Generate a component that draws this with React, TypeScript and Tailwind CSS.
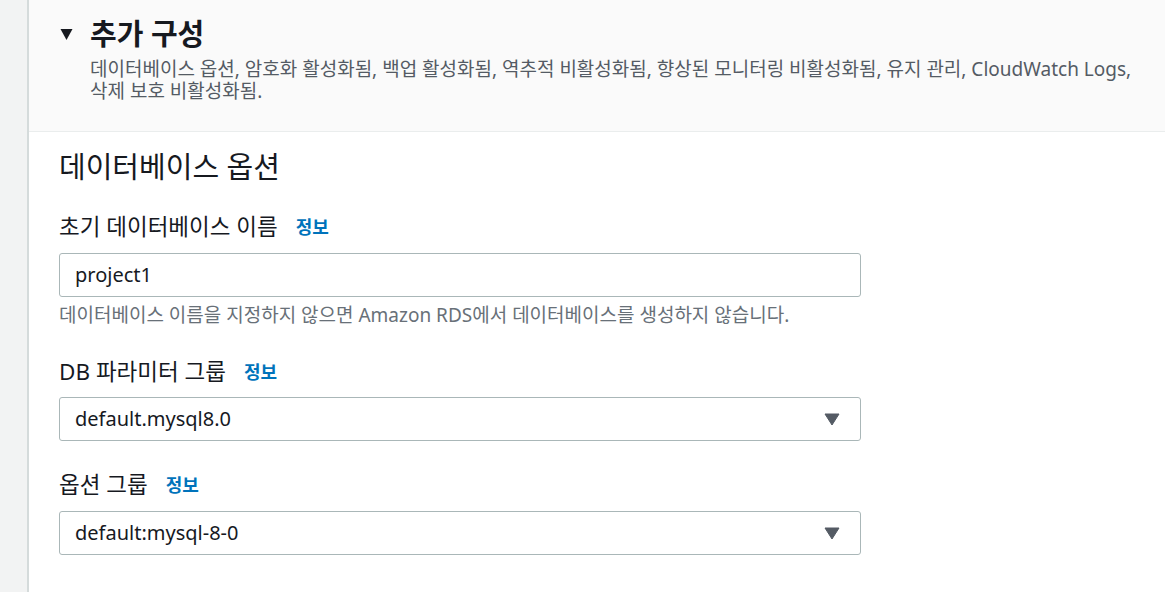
import React from "react";

const font = { fontFamily: '"Noto Sans", "Noto Sans CJK KR", sans-serif' };

function Label({ text }: { text: string }) {
  return (
    <div className="flex h-[30px] items-center gap-[18px] text-[22.5px] text-[#16191f]">
      <span>{text}</span>
      <span className="text-[18px] font-bold text-[#0073bb]">정보</span>
    </div>
  );
}

function Caret() {
  return (
    <svg width="16" height="13" viewBox="0 0 16 13" className="shrink-0">
      <path d="M1 1h14l-7 11z" fill="#545b64" stroke="#545b64" strokeWidth="1" strokeLinejoin="round" />
    </svg>
  );
}

function SelectBox({ value }: { value: string }) {
  return (
    <div className="flex h-[44px] w-[802px] items-center justify-between rounded-[3px] border border-[#aab7b8] bg-white pl-[15px] pr-[20px] text-[20px] text-[#16191f]">
      <span>{value}</span>
      <Caret />
    </div>
  );
}

export default function App() {
  return (
    <div style={font} className="flex h-[592px] w-[1165px] overflow-hidden bg-white">
      <div className="w-[29px] shrink-0 border-r-2 border-[#d5dbdb] bg-[#f2f3f3]" />
      <div className="flex-1">
        <div className="h-[132px] border-b border-[#eaeded] bg-[#fafafa] pl-[31px] pt-[15px]">
          <div className="flex h-[38px] items-center">
            <svg width="13" height="13" viewBox="0 0 13 13" className="mr-[17px]">
              <path d="M0.5 1h12l-6 11z" fill="#16191f" />
            </svg>
            <span className="text-[29px] font-bold text-[#16191f]">추가 구성</span>
          </div>
          <p className="mt-[5px] pl-[30px] text-[19px] leading-[22px] text-[#545b64]">
            데이터베이스 옵션, 암호화 활성화됨, 백업 활성화됨, 역추적 비활성화됨, 향상된 모니터링 비활성화됨, 유지 관리, CloudWatch Logs,
            <br />
            삭제 보호 비활성화됨.
          </p>
        </div>
        <div className="pl-[30px] pt-[15px]">
          <h2 className="text-[29px] leading-[40px] text-[#16191f]">데이터베이스 옵션</h2>
          <div className="mt-[25px]">
            <Label text="초기 데이터베이스 이름" />
            <div className="mt-[11px] flex h-[44px] w-[802px] items-center rounded-[3px] border border-[#aab7b8] bg-white px-[15px] text-[20px] text-[#16191f]">
              project1
            </div>
            <p className="mt-[5px] text-[19px] leading-[26px] text-[#687078]">
              데이터베이스 이름을 지정하지 않으면 Amazon RDS에서 데이터베이스를 생성하지 않습니다.
            </p>
          </div>
          <div className="mt-[29px]">
            <Label text="DB 파라미터 그룹" />
            <div className="mt-[10px]">
              <SelectBox value="default.mysql8.0" />
            </div>
          </div>
          <div className="mt-[29px]">
            <Label text="옵션 그룹" />
            <div className="mt-[11px]">
              <SelectBox value="default:mysql-8-0" />
            </div>
          </div>
        </div>
      </div>
    </div>
  );
}
